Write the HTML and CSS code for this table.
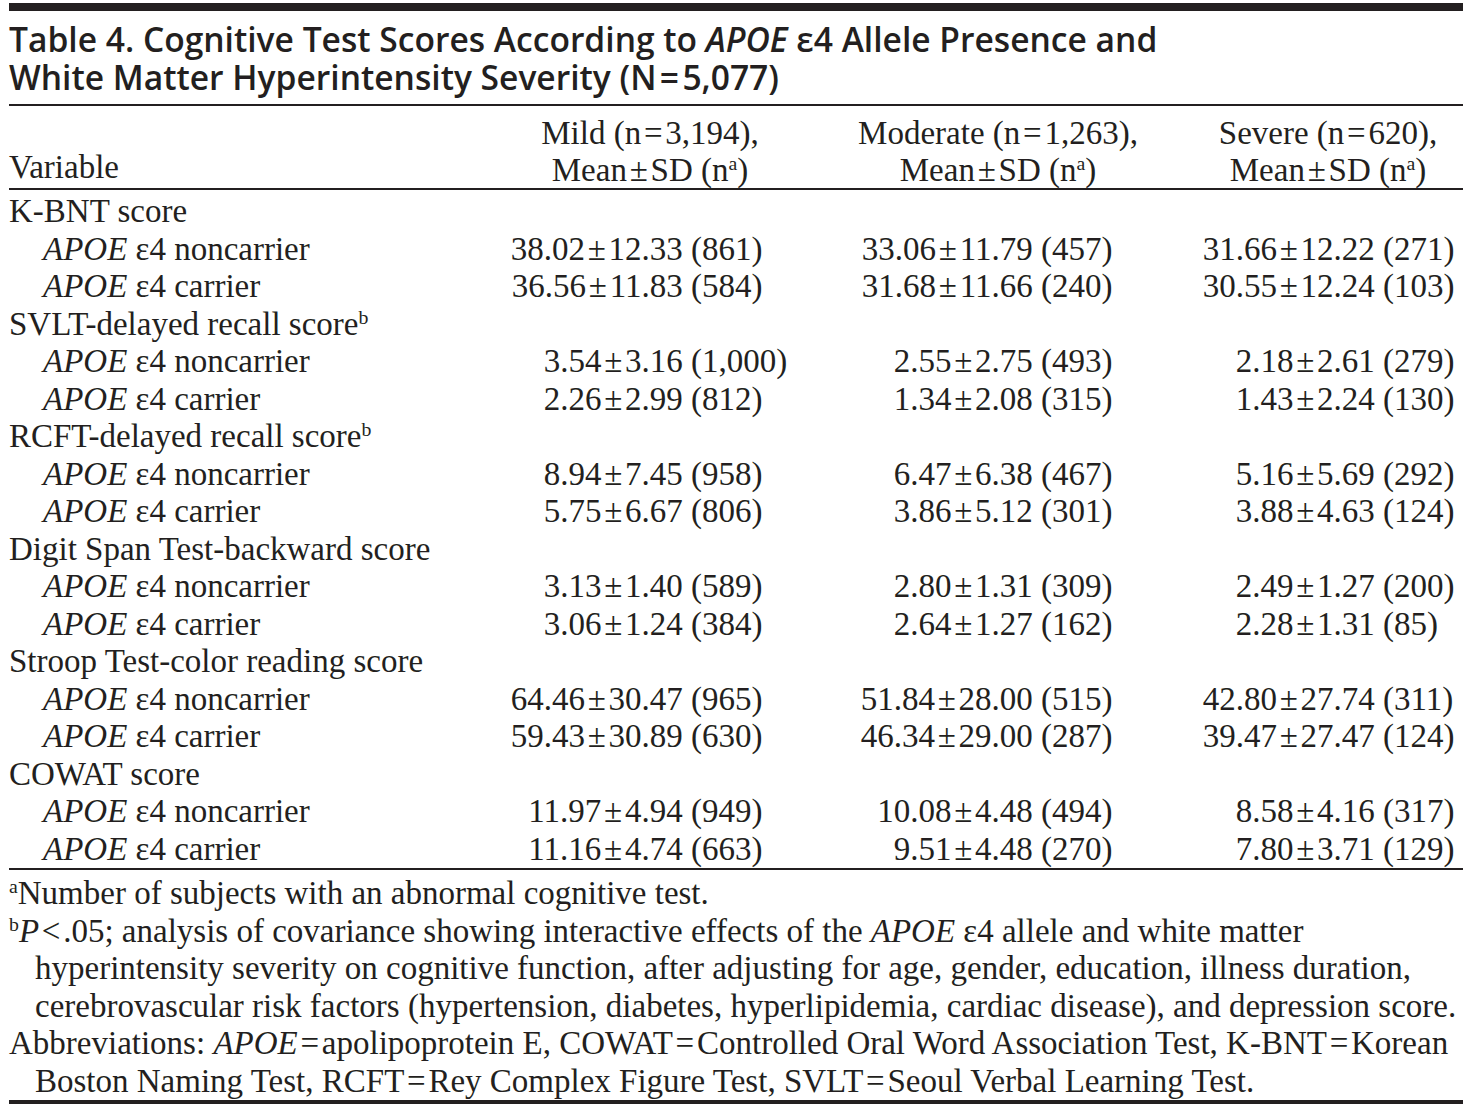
FILE: index.html
```html
<!DOCTYPE html>
<html lang="en">
<head>
<meta charset="utf-8">
<title>Table 4</title>
<link rel="stylesheet" href="styles.css">
</head>
<body>
<div class="page">
  <div class="rule rule-top"></div>
  <h1 class="title"><span class="tl">Table 4. Cognitive Test Scores According to <i>APOE</i> ε4 Allele Presence and</span><span class="tl">White Matter Hyperintensity Severity (N&#8202;=&#8202;5,077)</span></h1>
  <div class="rule rule-thin"></div>

  <div class="head">
    <div class="hc hc-var">Variable</div>
    <div class="hc">Mild (n&#8202;=&#8202;3,194),<br>Mean&#8202;±&#8202;SD (n<sup>a</sup>)</div>
    <div class="hc">Moderate (n&#8202;=&#8202;1,263),<br>Mean&#8202;±&#8202;SD (n<sup>a</sup>)</div>
    <div class="hc">Severe (n&#8202;=&#8202;620),<br>Mean&#8202;±&#8202;SD (n<sup>a</sup>)</div>
  </div>
  <div class="rule rule-thin"></div>

  <div class="body">
    <div class="row"><div class="label">K-BNT score</div></div>
    <div class="row sub"><div class="label"><i>APOE</i> ε4 noncarrier</div>
      <div class="val mild"><span class="m">38.02&#8202;±&#8202;12.33</span><span>(861)</span></div>
      <div class="val mod"><span class="m">33.06&#8202;±&#8202;11.79</span><span>(457)</span></div>
      <div class="val sev"><span class="m">31.66&#8202;±&#8202;12.22</span><span>(271)</span></div></div>
    <div class="row sub"><div class="label"><i>APOE</i> ε4 carrier</div>
      <div class="val mild"><span class="m">36.56&#8202;±&#8202;11.83</span><span>(584)</span></div>
      <div class="val mod"><span class="m">31.68&#8202;±&#8202;11.66</span><span>(240)</span></div>
      <div class="val sev"><span class="m">30.55&#8202;±&#8202;12.24</span><span>(103)</span></div></div>

    <div class="row"><div class="label">SVLT-delayed recall score<sup>b</sup></div></div>
    <div class="row sub"><div class="label"><i>APOE</i> ε4 noncarrier</div>
      <div class="val mild"><span class="m">3.54&#8202;±&#8202;3.16</span><span>(1,000)</span></div>
      <div class="val mod"><span class="m">2.55&#8202;±&#8202;2.75</span><span>(493)</span></div>
      <div class="val sev"><span class="m">2.18&#8202;±&#8202;2.61</span><span>(279)</span></div></div>
    <div class="row sub"><div class="label"><i>APOE</i> ε4 carrier</div>
      <div class="val mild"><span class="m">2.26&#8202;±&#8202;2.99</span><span>(812)</span></div>
      <div class="val mod"><span class="m">1.34&#8202;±&#8202;2.08</span><span>(315)</span></div>
      <div class="val sev"><span class="m">1.43&#8202;±&#8202;2.24</span><span>(130)</span></div></div>

    <div class="row"><div class="label">RCFT-delayed recall score<sup>b</sup></div></div>
    <div class="row sub"><div class="label"><i>APOE</i> ε4 noncarrier</div>
      <div class="val mild"><span class="m">8.94&#8202;±&#8202;7.45</span><span>(958)</span></div>
      <div class="val mod"><span class="m">6.47&#8202;±&#8202;6.38</span><span>(467)</span></div>
      <div class="val sev"><span class="m">5.16&#8202;±&#8202;5.69</span><span>(292)</span></div></div>
    <div class="row sub"><div class="label"><i>APOE</i> ε4 carrier</div>
      <div class="val mild"><span class="m">5.75&#8202;±&#8202;6.67</span><span>(806)</span></div>
      <div class="val mod"><span class="m">3.86&#8202;±&#8202;5.12</span><span>(301)</span></div>
      <div class="val sev"><span class="m">3.88&#8202;±&#8202;4.63</span><span>(124)</span></div></div>

    <div class="row"><div class="label">Digit Span Test-backward score</div></div>
    <div class="row sub"><div class="label"><i>APOE</i> ε4 noncarrier</div>
      <div class="val mild"><span class="m">3.13&#8202;±&#8202;1.40</span><span>(589)</span></div>
      <div class="val mod"><span class="m">2.80&#8202;±&#8202;1.31</span><span>(309)</span></div>
      <div class="val sev"><span class="m">2.49&#8202;±&#8202;1.27</span><span>(200)</span></div></div>
    <div class="row sub"><div class="label"><i>APOE</i> ε4 carrier</div>
      <div class="val mild"><span class="m">3.06&#8202;±&#8202;1.24</span><span>(384)</span></div>
      <div class="val mod"><span class="m">2.64&#8202;±&#8202;1.27</span><span>(162)</span></div>
      <div class="val sev"><span class="m">2.28&#8202;±&#8202;1.31</span><span>(85)</span></div></div>

    <div class="row"><div class="label">Stroop Test-color reading score</div></div>
    <div class="row sub"><div class="label"><i>APOE</i> ε4 noncarrier</div>
      <div class="val mild"><span class="m">64.46&#8202;±&#8202;30.47</span><span>(965)</span></div>
      <div class="val mod"><span class="m">51.84&#8202;±&#8202;28.00</span><span>(515)</span></div>
      <div class="val sev"><span class="m">42.80&#8202;±&#8202;27.74</span><span>(311)</span></div></div>
    <div class="row sub"><div class="label"><i>APOE</i> ε4 carrier</div>
      <div class="val mild"><span class="m">59.43&#8202;±&#8202;30.89</span><span>(630)</span></div>
      <div class="val mod"><span class="m">46.34&#8202;±&#8202;29.00</span><span>(287)</span></div>
      <div class="val sev"><span class="m">39.47&#8202;±&#8202;27.47</span><span>(124)</span></div></div>

    <div class="row"><div class="label">COWAT score</div></div>
    <div class="row sub"><div class="label"><i>APOE</i> ε4 noncarrier</div>
      <div class="val mild"><span class="m">11.97&#8202;±&#8202;4.94</span><span>(949)</span></div>
      <div class="val mod"><span class="m">10.08&#8202;±&#8202;4.48</span><span>(494)</span></div>
      <div class="val sev"><span class="m">8.58&#8202;±&#8202;4.16</span><span>(317)</span></div></div>
    <div class="row sub"><div class="label"><i>APOE</i> ε4 carrier</div>
      <div class="val mild"><span class="m">11.16&#8202;±&#8202;4.74</span><span>(663)</span></div>
      <div class="val mod"><span class="m">9.51&#8202;±&#8202;4.48</span><span>(270)</span></div>
      <div class="val sev"><span class="m">7.80&#8202;±&#8202;3.71</span><span>(129)</span></div></div>
  </div>
  <div class="rule rule-thin"></div>

  <div class="notes">
    <p class="fn"><sup>a</sup>Number of subjects with an abnormal cognitive test.</p>
    <p class="fn hang"><sup>b</sup><i>P</i>&#8202;&lt;&#8202;.05; analysis of covariance showing interactive effects of the <i>APOE</i> ε4 allele and white matter<br>hyperintensity severity on cognitive function, after adjusting for age, gender, education, illness duration,<br>cerebrovascular risk factors (hypertension, diabetes, hyperlipidemia, cardiac disease), and depression score.</p>
    <p class="fn hang">Abbreviations: <i>APOE</i>&#8202;=&#8202;apolipoprotein E, COWAT&#8202;=&#8202;Controlled Oral Word Association Test, K-BNT&#8202;=&#8202;Korean<br>Boston Naming Test, RCFT&#8202;=&#8202;Rey Complex Figure Test, SVLT&#8202;=&#8202;Seoul Verbal Learning Test.</p>
  </div>
  <div class="rule rule-bottom"></div>
</div>
</body>
</html>
```

FILE: styles.css
```css
html, body {
  margin: 0;
  padding: 0;
  background: #ffffff;
}

body {
  color: #231f20;
  font-family: "Liberation Serif", "Times New Roman", serif;
  font-size: 33px;
}

.page {
  width: 1454px;
  margin-left: 9px;
  padding-top: 3px;
}

.rule {
  background: #231f20;
}

.rule-top {
  height: 8px;
}

.rule-thin {
  height: 2px;
}

.rule-bottom {
  height: 4px;
}

.title {
  margin: 0;
  padding: 10px 0 8px;
  font-family: "Open Sans", "Noto Sans", sans-serif;
  font-weight: 600;
  font-stretch: 100%;
  font-size: 33.6px;
  line-height: 37.5px;
  white-space: nowrap;
}

.tl {
  display: block;
  height: 37.5px;
}

.title i {
  font-style: italic;
}

.head,
.row {
  display: grid;
  grid-template-columns: 488px 306px 390px 270px;
  white-space: nowrap;
}

.head {
  align-items: end;
  padding-top: 9px;
  line-height: 36.5px;
}

.hc {
  text-align: center;
}

.hc-var {
  text-align: left;
  padding-bottom: 3px;
}

.body {
  padding-top: 3px;
}

.row {
  height: 37.5px;
  line-height: 37.5px;
}

.sub .label {
  padding-left: 34px;
}

.val {
  display: grid;
}

.val .m {
  text-align: right;
  padding-right: 0.25em;
}

.val.mild {
  grid-template-columns: 194px auto;
}

.val.mod {
  grid-template-columns: 238px auto;
}

.val.sev {
  grid-template-columns: 190px auto;
}

sup {
  font-size: 0.6em;
  line-height: 0;
  vertical-align: 0.55em;
}

.notes {
  padding: 5px 0 0;
}

.fn {
  margin: 0;
  line-height: 37.5px;
  white-space: nowrap;
}

.hang {
  padding-left: 26px;
  text-indent: -26px;
}
```
